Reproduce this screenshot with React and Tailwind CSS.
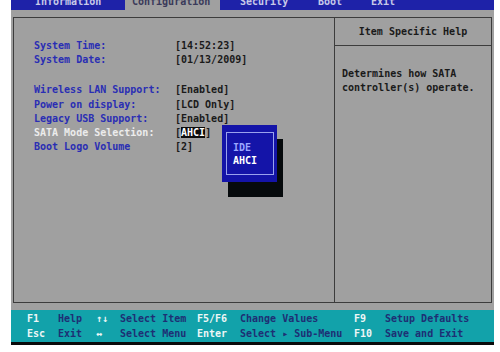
const mono = { fontFamily: '"DejaVu Sans Mono", "Liberation Mono", monospace' };

const rows = [
  { label: 'System Time:', value: '[14:52:23]' },
  { label: 'System Date:', value: '[01/13/2009]' },
  { gap: true },
  { label: 'Wireless LAN Support:', value: '[Enabled]' },
  { label: 'Power on display:', value: '[LCD Only]' },
  { label: 'Legacy USB Support:', value: '[Enabled]' },
  { label: 'SATA Mode Selection:', value: 'AHCI', active: true },
  { label: 'Boot Logo Volume', value: '[2]' },
];

const keys = [
  ['F1', 'Help', '↑↓', 'Select Item', 'F5/F6', 'Change Values', 'F9', 'Setup Defaults'],
  ['Esc', 'Exit', '↔', 'Select Menu', 'Enter', 'Select ▸ Sub-Menu', 'F10', 'Save and Exit'],
];

export default function App() {
  return (
    <div className="relative w-[500px] h-[352px] bg-white text-[10px] font-bold" style={mono}>
      <div className="ml-[11px] w-[483px]">
        {/* tab bar, cut off at the top */}
        <div className="flex h-[10px] bg-[#1e22a8] overflow-hidden leading-[10px]">
          <div className="w-[114px] pl-[24px] text-[#c8cae8]"><div className="-mt-[3px]">Information</div></div>
          <div className="w-[95px] pl-[7px] bg-[#a0a0a0] text-[#3a3a5a]"><div className="-mt-[3px]">Configuration</div></div>
          <div className="w-[78px] pl-[20px] text-[#c8cae8]"><div className="-mt-[3px]">Security</div></div>
          <div className="w-[56px] pl-[20px] text-[#c8cae8]"><div className="-mt-[3px]">Boot</div></div>
          <div className="pl-[17px] text-[#c8cae8]"><div className="-mt-[3px]">Exit</div></div>
        </div>

        {/* body */}
        <div className="h-[300px] bg-[#a0a0a0] px-[2px] pt-[7px] pb-[7px]">
          <div className="grid grid-cols-[321px_1fr] h-full border border-[#3c3c3c]">
            <div className="pl-[20px] pt-[21px] leading-[14.2px] border-r border-[#3c3c3c]">
              {rows.map((r, i) =>
                r.gap ? (
                  <div key={i} className="h-[16px]" />
                ) : (
                  <div key={i} className="grid grid-cols-[141px_auto]">
                    <span className={r.active ? 'text-[#ececec]' : 'text-[#2a2eb4]'}>{r.label}</span>
                    {r.active ? (
                      <span className="text-[#1a1a1a]">
                        [<span className="bg-[#0c0c0c] text-white">{r.value}</span>]
                      </span>
                    ) : (
                      <span className="text-[#1a1a1a]">{r.value}</span>
                    )}
                  </div>
                )
              )}
            </div>
            <div className="flex flex-col">
              <div className="h-[28px] flex items-center justify-center border-b border-[#3c3c3c] text-[#1a1a1a]">
                Item Specific Help
              </div>
              <div className="pl-[7px] pt-[21px] leading-[14px] text-[#1a1a1a]">
                <div>Determines how SATA</div>
                <div>controller(s) operate.</div>
              </div>
            </div>
          </div>
        </div>

        {/* key legend */}
        <div className="h-[32px] bg-[#12a2aa] pl-[16px] pt-[1px] leading-[15px]">
          {keys.map((row, i) => (
            <div key={i} className="grid grid-cols-[31px_38px_24px_77px_43px_114px_31px_auto]">
              {row.map((t, j) => (
                <span key={j} className={j % 2 === 0 ? 'text-[#eef6f6]' : 'text-[#1e2f74]'}>{t}</span>
              ))}
            </div>
          ))}
        </div>
        <div className="h-[3px] bg-[#0a0a0a]" />
      </div>

      {/* option popup */}
      <div className="absolute left-[228px] top-[139px] w-[55px] h-[58px] bg-[#060a0c]" />
      <div className="absolute left-[222px] top-[125px] w-[55px] h-[57px] bg-[#1414a8] pl-[4px] pr-[3px] pt-[7px] pb-[7px]">
        <div className="h-full border border-[#9aa2ee] pl-[6px] pt-[8px] leading-[13px]">
          <div className="text-[#9aa6ff]">IDE</div>
          <div className="text-white">AHCI</div>
        </div>
      </div>
    </div>
  );
}
